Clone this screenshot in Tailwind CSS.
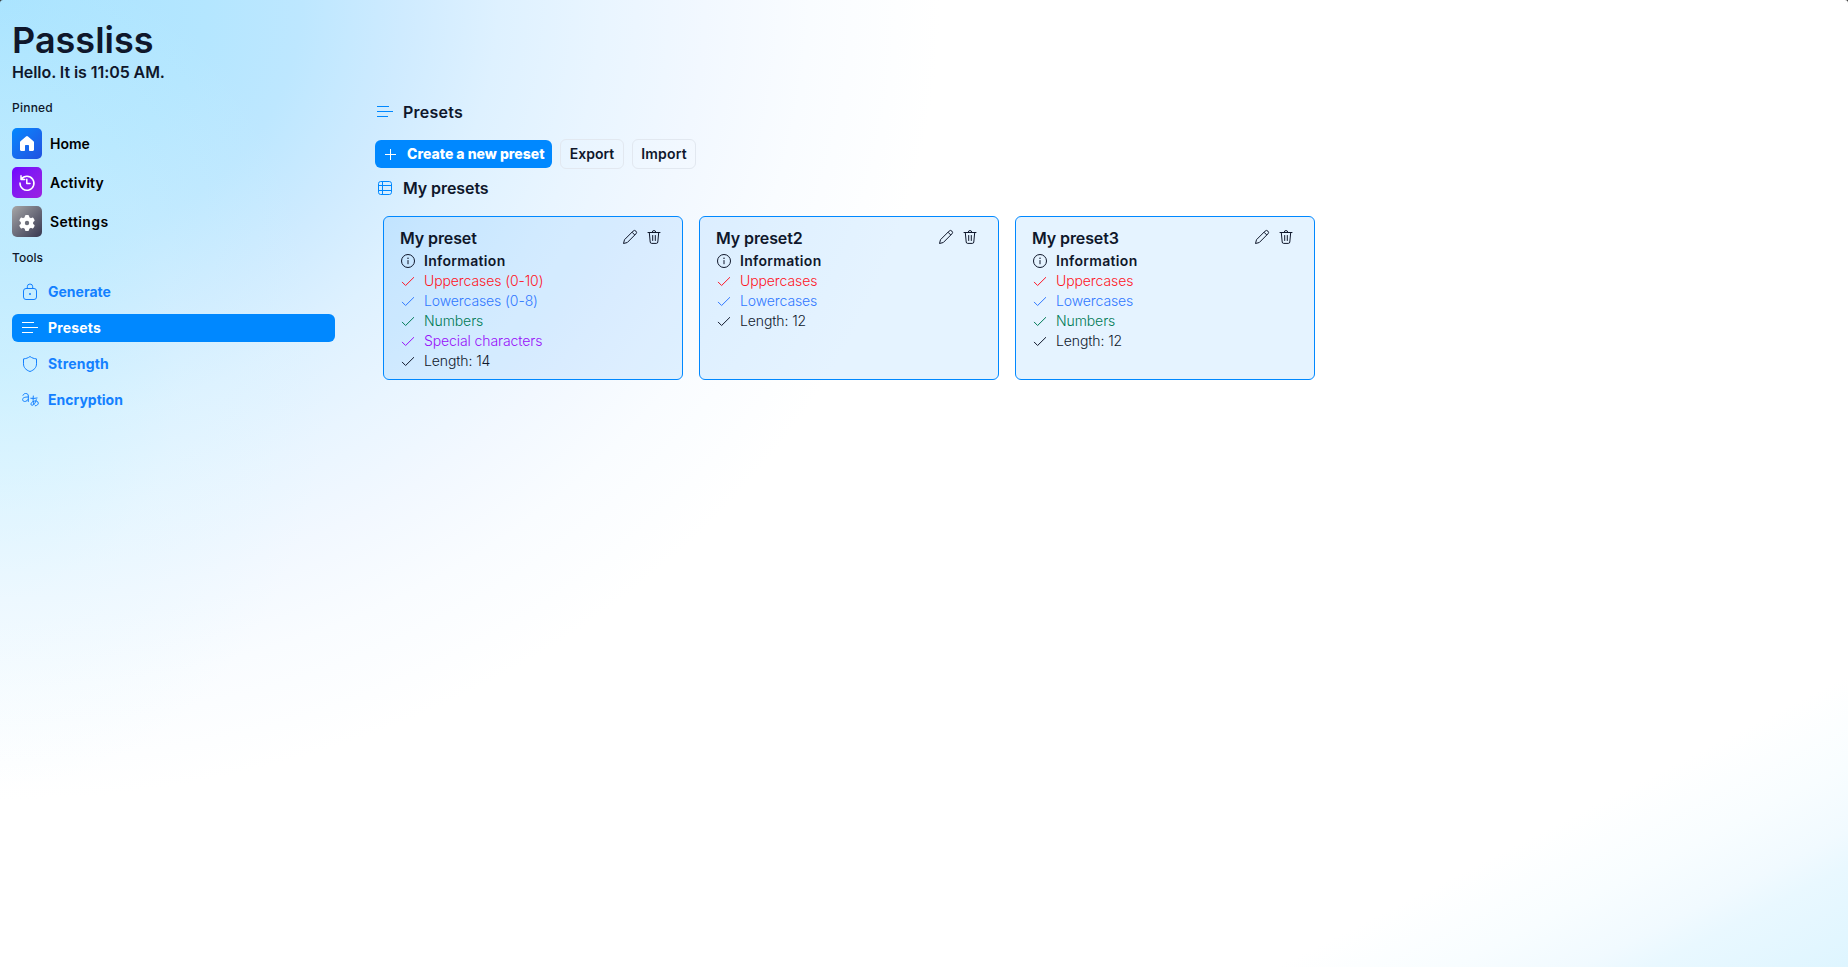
<!DOCTYPE html>
<html lang="en">
<head>
<meta charset="utf-8">
<title>Passliss</title>
<script src="https://cdn.jsdelivr.net/npm/@tailwindcss/browser@4"></script>
</head>
<body class="bg-[#333] font-['Inter',sans-serif] text-slate-900">
<svg class="hidden">
  <defs>
    <symbol id="lines" viewBox="0 0 16 16"><path d="M0 2.500h12M0 7.500h16M0 12.500h11" fill="none" stroke="currentColor"/></symbol>
    <symbol id="check" viewBox="0 0 16 16"><path d="M2.300 9.200 5.600 12.500 13.700 4.500" fill="none" stroke="currentColor" stroke-linecap="round" stroke-linejoin="round"/></symbol>
    <symbol id="info" viewBox="0 0 16 16"><circle cx="8" cy="8" r="6.500" fill="none" stroke="currentColor"/><path d="M8 7.500v3.300" stroke="currentColor" stroke-linecap="round"/><circle cx="8" cy="5.300" r=".75" fill="currentColor"/></symbol>
    <symbol id="pencil" viewBox="0 0 16 16"><path d="M1.500 14.500l1-3.800 8.600-8.600a1.900 1.900 0 0 1 2.800 2.800l-8.600 8.600zM10 3.200 12.800 6" fill="none" stroke="currentColor" stroke-linejoin="round"/></symbol>
    <symbol id="trash" viewBox="0 0 16 16"><path d="M2 3.500h12M6.200 3.300a1.800 1.800 0 0 1 3.600 0M3.300 3.500l.9 9.500a1.500 1.500 0 0 0 1.500 1.400h4.600a1.500 1.500 0 0 0 1.500-1.400l.9-9.500M6.700 6.500v5M9.300 6.500v5" fill="none" stroke="currentColor" stroke-linecap="round"/></symbol>
  </defs>
</svg>
<div class="flex h-[967px] w-[1848px] overflow-hidden rounded-t-[3px] bg-white bg-[linear-gradient(153deg,#ffffff00_calc(100%-260px),#f8fdff_calc(100%-180px),#f1faff_calc(100%-122px),#e9f8ff_calc(100%-90px),#def5ff_100%),radial-gradient(ellipse_330px_420px_at_0%_38%,#c0f4ff66_0%,#d8f8ff33_55%,#ffffff00_100%),radial-gradient(ellipse_940px_800px_at_0%_0%,#a8e3ff_0%,#b4e6ff_22%,#bde7ff_32%,#cfebff_43%,#def1ff_53%,#e9f5ff_64%,#f2f8ff_75%,#f9fcff_86%,#ffffff_100%)]">
  <aside class="flex w-[335px] flex-col pt-5 pl-3">
    <h1 class="h-10 text-[36px] leading-10 font-semibold">Passliss</h1>
    <p class="text-base font-semibold tracking-[-0.07px]">Hello. It is 11:05 AM.</p>
    <p class="mt-4 text-xs font-medium tracking-[0.23px]">Pinned</p>
    <nav class="mt-3 flex flex-col gap-[7.600px] text-sm font-semibold text-black">
      <a class="flex items-center gap-2"><span class="flex h-[31.400px] w-[30px] items-center justify-center rounded-[5px] bg-linear-to-br from-[#0088ff] to-[#2050e0] text-white"><svg class="size-5" viewBox="0 0 20 20" fill="currentColor"><path d="M9 2.400a1.500 1.500 0 0 1 2 0l5.500 4.900c.4.400.5.800.5 1.200v7c0 .9-.6 1.500-1.500 1.500H13c-.6 0-1-.4-1-1v-4c0-.6-.4-1-1-1H9c-.6 0-1 .4-1 1v4c0 .6-.4 1-1 1H4.500c-.9 0-1.500-.6-1.500-1.500v-7c0-.4.1-.8.500-1.200z"/></svg></span><span>Home</span></a>
      <a class="flex items-center gap-2"><span class="flex h-[31.400px] w-[30px] items-center justify-center rounded-[5px] bg-linear-to-br from-[#7000ff] to-[#9c20e0] text-white"><svg class="size-5" viewBox="0 0 20 20" fill="none" stroke="currentColor" stroke-width="1.500" stroke-linecap="round" stroke-linejoin="round"><path d="M4.300 6.200A7 7 0 1 1 3 10M4 2.800v3.700h3.700M9.800 6.200v4.300h3.200"/></svg></span><span class="tracking-[0.24px]">Activity</span></a>
      <a class="flex items-center gap-2"><span class="flex h-[31.400px] w-[30px] items-center justify-center rounded-[5px] bg-linear-to-br from-[#a8a8a8] to-[#383850] text-white"><svg class="mt-0.5 size-5" viewBox="0 0 20 20"><g fill="currentColor"><circle cx="10" cy="10" r="6.200"/><rect x="7.900" y="1.900" width="4.200" height="16.200" rx="1.300"/><rect x="7.900" y="1.900" width="4.200" height="16.200" rx="1.300" transform="rotate(60 10 10)"/><rect x="7.900" y="1.900" width="4.200" height="16.200" rx="1.300" transform="rotate(120 10 10)"/></g><circle cx="10" cy="10" r="2.200" fill="#6d6f7a"/></svg></span><span class="tracking-[0.37px]">Settings</span></a>
    </nav>
    <p class="mt-[12.600px] text-xs font-medium">Tools</p>
    <nav class="mt-3 flex flex-col gap-2 text-sm font-bold text-[#1380ff]">
      <a class="flex h-7 items-center gap-2 pl-[10px]"><svg class="size-[18px]" viewBox="0 0 18 18" fill="none" stroke="currentColor"><rect x="1.500" y="5.500" width="13" height="11" rx="2.500"/><path d="M5.300 5.500V3.700a2.700 2.700 0 0 1 5.400 0v1.800"/><circle cx="8" cy="11" r="1" fill="currentColor" stroke="none"/></svg><span>Generate</span></a>
      <a class="flex h-7 items-center gap-[10px] rounded-md bg-[#0088ff] pl-[10px] text-white"><svg class="size-4"><use href="#lines"/></svg><span class="tracking-[0.17px]">Presets</span></a>
      <a class="flex h-7 items-center gap-2 pl-[10px]"><svg class="size-[18px]" viewBox="0 0 18 18" fill="none" stroke="currentColor" stroke-linejoin="round"><path d="M8 1.500c1.900 1.400 4 2.200 6.500 2.400v4.900c0 3.600-2.200 6.200-6.500 7.700-4.300-1.500-6.500-4.100-6.500-7.700V3.900c2.500-.2 4.600-1 6.500-2.400z"/></svg><span class="tracking-[0.2px]">Strength</span></a>
      <a class="flex h-7 items-center gap-2 pl-[10px]"><svg class="size-[18px]" viewBox="0 0 18 18" fill="none" stroke="currentColor" stroke-linecap="round"><path d="M1 4.300C1.500 3 2.500 2.500 3.700 2.500 5.500 2.500 6.300 3.400 6.300 5v5.500M6.300 6C3 6 .6 6.500.6 8.500c0 2.700 4.200 2.700 5.700-.2M8.800 7.300c2 .3 4.200.2 6.300-.3M11.300 5c-.4 3-.3 6 .6 8.500M14.300 8.700c-.6 3-2.500 5.500-4.200 5.600-1.600 0-1.500-2.300.4-3.500 2.300-1.500 5.800-1 5.800 1.300 0 1.500-1.200 2.400-3 2.700"/></svg><span>Encryption</span></a>
    </nav>
  </aside>
  <main class="flex flex-col pt-[100px] pl-10">
    <h2 class="flex h-6 items-center gap-[10px] pl-[2px] text-base font-semibold"><svg class="size-4 text-[#0088ff]"><use href="#lines"/></svg><span class="tracking-[0.24px]">Presets</span></h2>
    <div class="mt-[15px] flex items-center gap-2 text-sm">
      <button class="flex h-7 w-[177px] items-center gap-[11px] rounded-md bg-[#0088ff] pl-[10px] font-extrabold whitespace-nowrap text-white"><svg class="size-[11px]" viewBox="0 0 11 11"><path d="M5.500 0v11M0 5.500h11" stroke="currentColor"/></svg><span>Create a new preset</span></button>
      <button class="flex h-[30px] w-16 items-center justify-center rounded-md border border-slate-200 font-semibold"><span>Export</span></button>
      <button class="flex h-[30px] w-16 items-center justify-center rounded-md border border-slate-200 font-semibold"><span class="tracking-[0.2px]">Import</span></button>
    </div>
    <h2 class="mt-[7px] flex h-6 items-center gap-[10px] pl-[2px] text-base font-semibold"><svg class="size-4 text-[#0088ff]" viewBox="0 0 16 16" fill="none" stroke="currentColor"><rect x="1.500" y="1.500" width="13" height="13" rx="2.200"/><path d="M5.500 1.500v13M1.500 5.500h13M1.500 10.500h13"/></svg><span class="tracking-[-0.08px]">My presets</span></h2>
    <section class="mt-4 ml-2 flex gap-4 text-sm font-light tracking-[-0.1px]">
      <article class="h-[164px] w-[300px] rounded-md border border-[#0088ff] bg-[#0088ff]/10 py-2 pr-5 pl-4">
        <div class="flex h-[26px] items-center"><h3 class="text-base font-semibold">My preset</h3><svg class="-mt-0.5 ml-auto size-4"><use href="#pencil"/></svg><svg class="-mt-0.5 ml-2 size-4"><use href="#trash"/></svg></div>
        <p class="flex items-center gap-2 font-semibold tracking-[0.31px]"><svg class="size-4"><use href="#info"/></svg>Information</p>
        <p class="flex items-center gap-2 text-[#ff1525]"><svg class="size-4"><use href="#check"/></svg>Uppercases (0-10)</p>
        <p class="flex items-center gap-2 text-[#3078ff]"><svg class="size-4"><use href="#check"/></svg>Lowercases (0-8)</p>
        <p class="flex items-center gap-2 text-[#007a55]"><svg class="size-4"><use href="#check"/></svg>Numbers</p>
        <p class="flex items-center gap-2 text-[#9810fa]"><svg class="size-4"><use href="#check"/></svg>Special characters</p>
        <p class="flex items-center gap-2"><svg class="size-4"><use href="#check"/></svg>Length: 14</p>
      </article>
      <article class="h-[164px] w-[300px] rounded-md border border-[#0088ff] bg-[#0088ff]/10 py-2 pr-5 pl-4">
        <div class="flex h-[26px] items-center"><h3 class="text-base font-semibold">My preset2</h3><svg class="-mt-0.5 ml-auto size-4"><use href="#pencil"/></svg><svg class="-mt-0.5 ml-2 size-4"><use href="#trash"/></svg></div>
        <p class="flex items-center gap-2 font-semibold tracking-[0.31px]"><svg class="size-4"><use href="#info"/></svg>Information</p>
        <p class="flex items-center gap-2 text-[#ff1525]"><svg class="size-4"><use href="#check"/></svg>Uppercases</p>
        <p class="flex items-center gap-2 text-[#3078ff]"><svg class="size-4"><use href="#check"/></svg>Lowercases</p>
        <p class="flex items-center gap-2"><svg class="size-4"><use href="#check"/></svg>Length: 12</p>
      </article>
      <article class="h-[164px] w-[300px] rounded-md border border-[#0088ff] bg-[#0088ff]/10 py-2 pr-5 pl-4">
        <div class="flex h-[26px] items-center"><h3 class="text-base font-semibold">My preset3</h3><svg class="-mt-0.5 ml-auto size-4"><use href="#pencil"/></svg><svg class="-mt-0.5 ml-2 size-4"><use href="#trash"/></svg></div>
        <p class="flex items-center gap-2 font-semibold tracking-[0.31px]"><svg class="size-4"><use href="#info"/></svg>Information</p>
        <p class="flex items-center gap-2 text-[#ff1525]"><svg class="size-4"><use href="#check"/></svg>Uppercases</p>
        <p class="flex items-center gap-2 text-[#3078ff]"><svg class="size-4"><use href="#check"/></svg>Lowercases</p>
        <p class="flex items-center gap-2 text-[#007a55]"><svg class="size-4"><use href="#check"/></svg>Numbers</p>
        <p class="flex items-center gap-2"><svg class="size-4"><use href="#check"/></svg>Length: 12</p>
      </article>
    </section>
  </main>
</div>
</body>
</html>
